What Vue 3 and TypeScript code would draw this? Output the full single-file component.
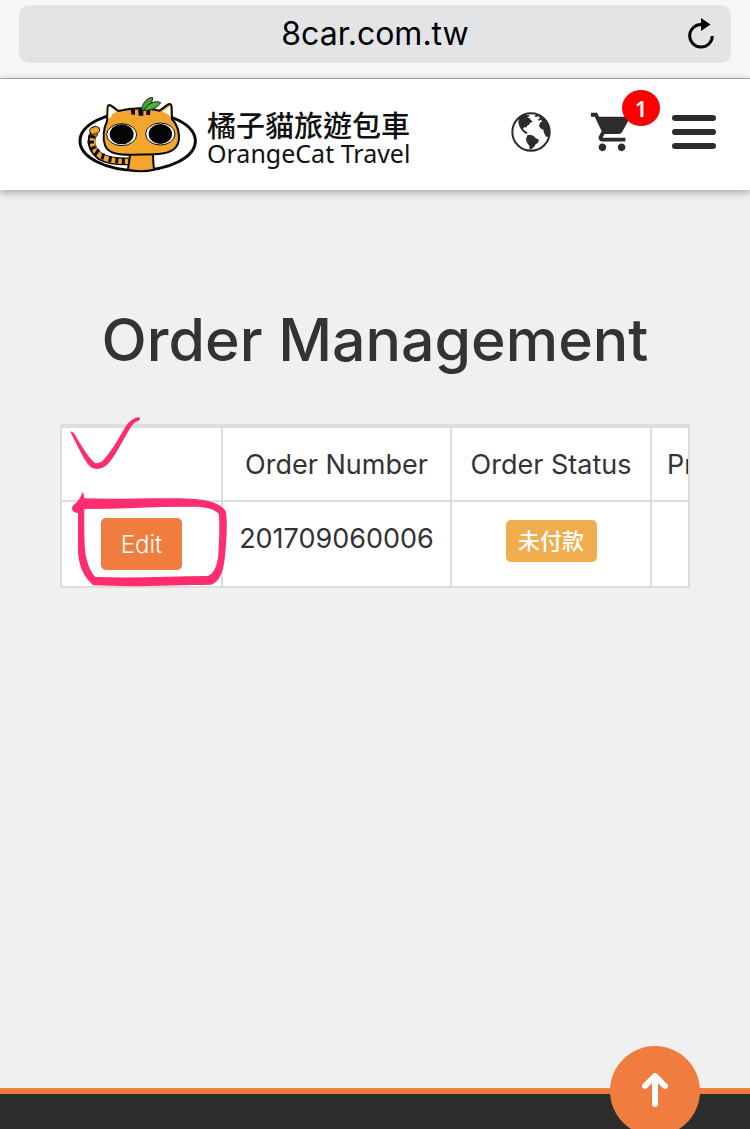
<script setup lang="ts">
interface Order {
  number: string
  status: string
}

const orders: Order[] = [{ number: '201709060006', status: '未付款' }]
const cartCount = 1

function scrollToTop(): void {
  window.scrollTo({ top: 0, behavior: 'smooth' })
}
</script>

<template>
  <div class="page">
    <div class="browser-bar">
      <div class="address">
        <span class="host">8car.com.tw</span>
        <button class="icon-button reload" type="button" aria-label="Reload">
          <svg width="30" height="34" viewBox="0 0 30 34">
            <path d="M15.5 7.5A11.3 11.3 0 1 0 26.3 19" fill="none" stroke="#000" stroke-width="3" />
            <path d="M15 1L24.500 7.500L15 14Z" />
          </svg>
        </button>
      </div>
    </div>

    <header class="site-header">
      <a class="brand" href="#" aria-label="OrangeCat Travel">
        <svg class="cat" width="135" height="100" viewBox="0 0 405 300">
          <ellipse cx="203" cy="168" rx="173" ry="88" fill="#fff" stroke="#0b0907" stroke-width="9" />
          <path d="M76 140C54 166 66 196 91 215C116 229 146 230 177 229" fill="none" stroke="#0b0907" stroke-width="23" />
          <path d="M78 138C57 166 68 196 93 214C118 228 146 230 177 229" fill="none" stroke="#f3a62e" stroke-width="16" />
          <ellipse cx="74" cy="136" rx="15" ry="11" transform="rotate(-14 74 136)" fill="#f3a62e" stroke="#0b0907" stroke-width="3" />
          <path d="M55 152l21 5M53 172l19-1M60 193l17-8M76 210l10-17M96 223l5-18M119 231l3-17M140 235l1-17M160 237v-17" stroke="#0b0907" stroke-width="9" />
          <path d="M180 202C180 223 175 239 174 254Q213 263 252 254Q249 230 249 202Z" fill="#f3a62e" stroke="#0b0907" stroke-width="6" />
          <path d="M111 108L113 65Q116 55 128 65L145 78Q207 62 269 77L293 59Q303 53 305 65L306 102C331 130 332 169 318 186C298 212 245 208 192 209C151 210 116 208 105 181C96 153 102 129 111 108Z" fill="#f3a62e" stroke="#0b0907" stroke-width="6" />
          <path d="M115 98L116 67Q124 65 140 82Q126 83 122 99Z" fill="#fff" />
          <path d="M276 81L300 64L301 96Q293 83 276 81Z" fill="#fff" />
          <path d="M181 71l14-1v19h-10zM204 68h16v24h-14zM229 69l13 1-2 20h-11z" fill="#0b0907" />
          <path d="M215 74C218 50 236 36 248 38C246 57 236 68 222 76Z" fill="#48a238" stroke="#142711" stroke-width="3" />
          <path d="M222 76C234 52 258 46 272 53C262 69 242 77 222 76Z" fill="#52ae3b" stroke="#142711" stroke-width="3" />
          <ellipse cx="155" cy="149" rx="45" ry="33" fill="#fff" stroke="#0b0907" stroke-width="3" />
          <ellipse cx="155" cy="148" rx="36" ry="30" fill="#050505" />
          <ellipse cx="271" cy="147" rx="44" ry="33" fill="#fff" stroke="#0b0907" stroke-width="3" />
          <ellipse cx="271" cy="147" rx="35" ry="30" fill="#050505" />
        </svg>
        <span class="brand-text">
          <span class="brand-zh">橘子貓旅遊包車</span>
          <span class="brand-en">OrangeCat Travel</span>
        </span>
      </a>

      <nav class="actions" aria-label="Site">
        <button class="icon-button" type="button" aria-label="Language">
          <svg width="42" height="42" viewBox="29 93 126 126">
            <circle cx="92" cy="156" r="56" fill="#fff" stroke="#2c2c2c" stroke-width="6" />
            <path d="M56 111Q68 101 78 99L76 104L83 106L87 104L87 109L81 113L88 115L92 121L97 124L92 129L89 127L88 133L80 138L78 143L73 141L68 146L71 151L77 154L82 160L78 162L69 156L63 149L57 139L54 128Z" fill="#2c2c2c" />
            <path d="M81 166L90 164L100 168L105 174L116 179L113 188L106 193L101 201L94 207L88 210L87 197L79 187L77 177Z" fill="#2c2c2c" />
            <path d="M110 104L101 108L107 111L114 109L119 113L114 118L115 123L121 119L126 124L119 128L116 137L120 145L129 149L131 158L137 170L144 170L149 157L147 138L139 122L126 109Z" fill="#2c2c2c" />
          </svg>
        </button>
        <button class="icon-button cart" type="button" aria-label="Cart">
          <svg width="46" height="46" viewBox="0 0 24 24" fill="#2c2c2c">
            <path d="M7 18c-1.100 0-1.990.9-1.990 2S5.900 22 7 22s2-.9 2-2-.9-2-2-2zM1 2v2h2l3.600 7.590-1.350 2.450c-.16.28-.25.61-.25.96 0 1.100.9 2 2 2h12v-2H7.420c-.14 0-.25-.11-.25-.25l.03-.12.9-1.630h7.450c.75 0 1.410-.41 1.750-1.030l3.580-6.490c.08-.14.12-.31.12-.48 0-.55-.45-1-1-1H5.210l-.94-2H1zm16 16c-1.100 0-1.990.9-1.990 2s.89 2 1.990 2 2-.9 2-2-.9-2-2-2z" />
          </svg>
          <span class="cart-count">{{ cartCount }}</span>
        </button>
        <button class="icon-button" type="button" aria-label="Menu">
          <svg width="44" height="34" viewBox="0 0 44 34" fill="#2c2c2c">
            <rect width="44" height="6" rx="3" />
            <rect y="14" width="44" height="6" rx="3" />
            <rect y="28" width="44" height="6" rx="3" />
          </svg>
        </button>
      </nav>
    </header>

    <main class="content">
      <h1>Order Management</h1>
      <div class="orders">
        <div class="table-scroll">
          <table>
            <thead>
              <tr>
                <th class="col-edit" scope="col" aria-label="Actions"></th>
                <th class="col-number" scope="col">Order Number</th>
                <th class="col-status" scope="col">Order Status</th>
                <th class="col-price" scope="col">Price</th>
              </tr>
            </thead>
            <tbody>
              <tr v-for="order in orders" :key="order.number">
                <td><button class="edit" type="button">Edit</button></td>
                <td>{{ order.number }}</td>
                <td><span class="status">{{ order.status }}</span></td>
                <td></td>
              </tr>
            </tbody>
          </table>
        </div>
        <svg class="marks" width="190" height="185" viewBox="0 0 570 555" fill="#ff2d6e" aria-hidden="true">
          <path d="M61 65Q68 63 77 78C97 111 117 145 134 158Q147 164 161 149C187 122 211 75 230 45Q251 20 268 22Q273 26 266 32Q254 34 244 49C218 91 194 146 166 169Q143 184 122 171C101 150 84 109 61 65Z" />
          <path fill-rule="evenodd" d="M98 246Q103 253 102 265C210 269 323 262 424 266C478 269 516 282 527 304C534 335 529 400 524 447C519 486 509 515 483 524C377 525 251 532 130 526C98 501 84 457 84 421L84 309Q66 306 66 296Q66 287 80 277Q91 266 98 246ZM103 297C103 343 102 402 107 434C113 466 123 486 136 501C253 505 365 499 473 498C492 492 502 466 505 435C507 395 510 341 506 311C491 294 460 290 424 290C320 289 212 297 103 297Z" />
        </svg>
      </div>
    </main>

    <footer class="site-footer"></footer>
    <button class="to-top" type="button" aria-label="Back to top" @click="scrollToTop">
      <svg width="26" height="34" viewBox="0 0 26 34" fill="none" stroke="#fff" stroke-width="6" stroke-linecap="round" stroke-linejoin="round">
        <path d="M13 4V31M3 13L13 3L23 13" />
      </svg>
    </button>
  </div>
</template>

<style>
body {
  margin: 0;
}
</style>

<style scoped>
.page {
  display: flex;
  flex-direction: column;
  min-height: 100vh;
  background: #f0f0f0;
  color: #333;
  font-family: Inter, "Liberation Sans", "Noto Sans CJK TC", sans-serif;
  font-size: 27px;
}

button {
  font-family: inherit;
  cursor: pointer;
}

.icon-button {
  display: flex;
  padding: 0;
  border: 0;
  background: none;
}

.browser-bar {
  padding: 5px 19px 15px;
  border-bottom: 1px solid #b2b2b2;
  background: #f7f7f8;
}

.address {
  display: grid;
  grid-template-columns: 1fr auto 1fr;
  align-items: center;
  height: 58px;
  padding: 0 15px;
  border-radius: 10px;
  background: #e3e4e6;
  color: #000;
}

.host {
  grid-column: 2;
  font-size: 32px;
  line-height: 40px;
}

.reload {
  justify-self: end;
}

.site-header {
  position: relative;
  display: flex;
  align-items: center;
  justify-content: space-between;
  box-sizing: border-box;
  height: 111px;
  padding: 0 34px 6px 70px;
  background: #fff;
  box-shadow: 0 2px 8px rgba(0, 0, 0, 0.35);
}

.brand {
  display: flex;
  align-items: center;
  color: #111;
  text-decoration: none;
}

.cat {
  margin-top: 6px;
}

.brand-text {
  display: flex;
  flex-direction: column;
  margin-top: 12px;
  padding-left: 2px;
  white-space: nowrap;
}

.brand-zh {
  font-family: "Noto Sans CJK TC", sans-serif;
  font-size: 29px;
  font-weight: 500;
  line-height: 30px;
}

.brand-en {
  font-family: "Noto Sans", sans-serif;
  font-size: 25px;
  line-height: 28px;
}

.actions {
  display: flex;
  align-items: center;
}

.cart {
  position: relative;
  margin: 0 37px;
}

.cart-count {
  position: absolute;
  top: -19px;
  right: -25px;
  width: 38px;
  border-radius: 50%;
  background: #f00;
  color: #fff;
  font-family: "Noto Sans", sans-serif;
  font-size: 22px;
  font-weight: 600;
  line-height: 36px;
  text-align: center;
}

.content {
  flex: 1;
  padding: 110px 60px 60px;
}

h1 {
  margin: 0 0 44px;
  font-size: 59px;
  font-weight: 500;
  line-height: 80px;
  text-align: center;
}

.orders {
  position: relative;
}

.table-scroll {
  overflow: hidden;
  border: 2px solid #ddd;
  border-top-width: 4px;
  background: #fff;
}

table {
  width: 776px;
  border-collapse: separate;
  border-spacing: 0;
  table-layout: fixed;
}

th,
td {
  box-sizing: border-box;
  padding: 16px 0;
  border-right: 2px solid #ddd;
  font-weight: 400;
  line-height: 42px;
  text-align: center;
  vertical-align: top;
}

th {
  height: 74px;
  padding-bottom: 14px;
  border-bottom: 2px solid #ddd;
}

.col-edit {
  width: 161px;
}

.col-number {
  width: 229px;
}

.col-status {
  width: 200px;
}

.col-price {
  padding-left: 15px;
  text-align: left;
}

td {
  height: 84px;
}

.edit {
  display: block;
  width: 81px;
  height: 52px;
  margin: 0 auto;
  padding: 0;
  border: 0;
  border-radius: 5px;
  background: #f07c40;
  color: #fff;
  font-size: 24px;
  font-weight: 300;
}

.status {
  display: block;
  box-sizing: border-box;
  width: 91px;
  height: 42px;
  margin: 2px auto 0;
  border-radius: 5px;
  background: #f0ad4e;
  color: #fff;
  font-family: "Noto Sans CJK TC", sans-serif;
  font-size: 22px;
  font-weight: 500;
  line-height: 38px;
}

.marks {
  position: absolute;
  top: -14px;
  left: -10px;
  pointer-events: none;
}

.site-footer {
  height: 35px;
  border-top: 6px solid #f07c40;
  background: #2d2d2d;
}

.to-top {
  position: fixed;
  right: 50px;
  bottom: -7px;
  display: flex;
  align-items: center;
  justify-content: center;
  width: 90px;
  height: 90px;
  padding: 0 0 2px;
  border: 0;
  border-radius: 50%;
  background: #f07c40;
}
</style>
